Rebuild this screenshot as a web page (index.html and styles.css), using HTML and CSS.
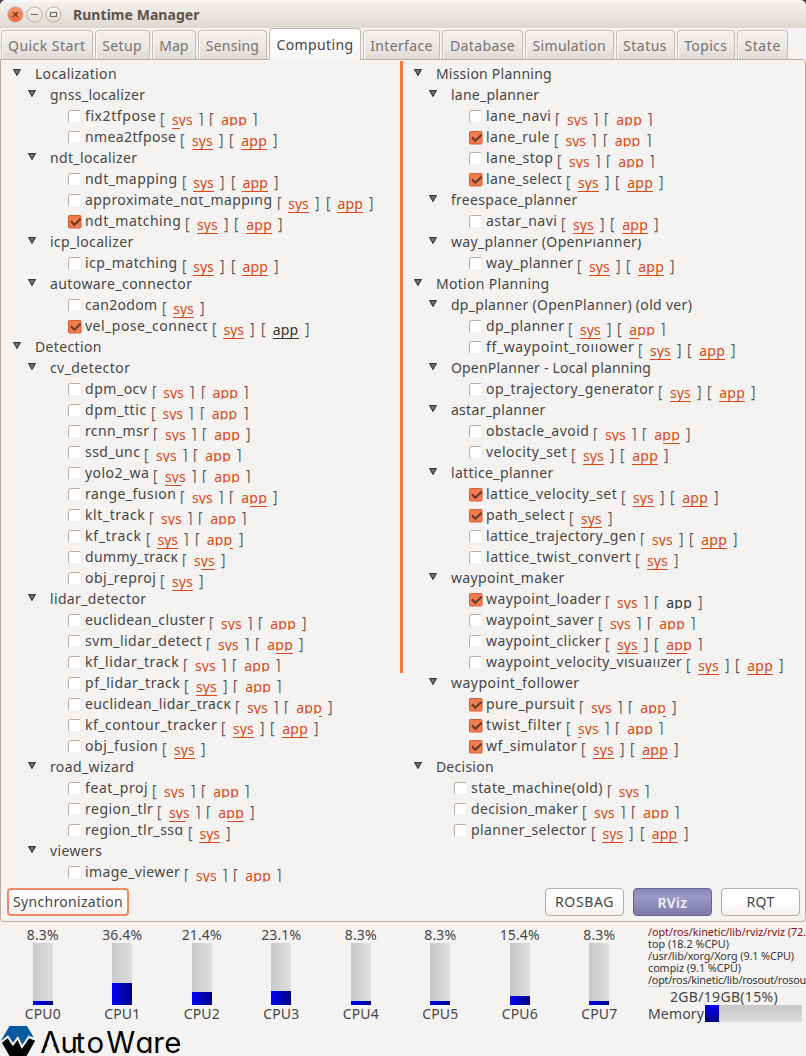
FILE: index.html
```html
<!DOCTYPE html>
<html lang="en">
<head>
<meta charset="utf-8">
<title>Runtime Manager</title>
<link rel="stylesheet" href="styles.css">
</head>
<body>
<div class="window">
  <header class="titlebar">
    <svg class="controls" width="60" height="20" viewBox="0 0 60 20">
      <defs>
        <linearGradient id="g-close" x1="0" y1="0" x2="0" y2="1"><stop offset="0" stop-color="#f79a76"/><stop offset="1" stop-color="#ee6a3c"/></linearGradient>
        <linearGradient id="g-btn" x1="0" y1="0" x2="0" y2="1"><stop offset="0" stop-color="#f8f6f4"/><stop offset="1" stop-color="#e2dcd6"/></linearGradient>
      </defs>
      <circle cx="9.4" cy="9.5" r="7.6" fill="url(#g-close)" stroke="#cf9f8a"/>
      <path d="M7 7l5 5M12 7l-5 5" stroke="#6b3320" stroke-width="1.2"/>
      <circle cx="28.4" cy="9.5" r="7.6" fill="url(#g-btn)" stroke="#b9afa6"/>
      <path d="M25 9.5h7" stroke="#75695f" stroke-width="1.2"/>
      <circle cx="47.4" cy="9.5" r="7.6" fill="url(#g-btn)" stroke="#b9afa6"/>
      <rect x="44.5" y="7.5" width="6" height="4" fill="none" stroke="#75695f" stroke-width="1.1"/>
    </svg>
    <h1 class="title" data-fit="126.5">Runtime Manager</h1>
  </header>
  <nav class="tabs" id="tabs"></nav>
  <main class="panel">
    <div class="columns">
      <section class="tree" id="tree-left"></section>
      <div class="sash"></div>
      <section class="tree" id="tree-right"></section>
    </div>
    <div class="actions">
      <button class="btn btn-sync"><span data-fit="110">Synchronization</span></button>
      <span class="grow"></span>
      <button class="btn"><span data-fit="59">ROSBAG</span></button>
      <button class="btn btn-on"><span data-fit="30">RViz</span></button>
      <button class="btn"><span data-fit="28">RQT</span></button>
    </div>
  </main>
  <footer class="status">
    <div class="cpus" id="cpus"></div>
    <div class="usage">
      <div class="procs">
        <div class="hot"><span data-fit="158">/opt/ros/kinetic/lib/rviz/rviz (72.</span></div>
        <div><span data-fit="81">top (18.2 %CPU)</span></div>
        <div><span data-fit="146">/usr/lib/xorg/Xorg (9.1 %CPU)</span></div>
        <div><span data-fit="93">compiz (9.1 %CPU)</span></div>
        <div><span data-fit="158">/opt/ros/kinetic/lib/rosout/rosou</span></div>
      </div>
      <div class="mem-text"><span data-fit="108">2GB/19GB(15%)</span></div>
      <div class="mem"><span class="mem-label" data-fit="56">Memory</span><div class="mem-bar"><i></i></div></div>
    </div>
  </footer>
  <svg class="logo" width="190" height="31" viewBox="0 1025 190 31">
    <path d="M9.5 1026H27L33.5 1037L28.8 1038L22 1047L17.7 1039L13 1045L8 1038L3 1041L1 1040.5Z" fill="#0a5aa2"/>
    <path d="M1.5 1042L8 1038L13 1044L17.7 1039L22 1047L28.8 1038L35.3 1040.5L26.5 1056H9.5Z" fill="#000"/>
    <path d="M1 1042.3L7.8 1036.8L13 1044.5L17.7 1038L22 1047L29 1036.8L35 1039.5" fill="none" stroke="#f5f3f2" stroke-width="2"/>
    <text class="wordmark" y="1053" x="40.3 60.6 75.4 86.4 106.2 135.6 153.3 164.3">AutoWare</text>
    <path d="M50.4 1037L44.7 1051.8L44.4 1053H56.4L56 1051.8Z" fill="#f5f3f2"/>
  </svg>
</div>
<script src="app.js"></script>
</body>
</html>
```
FILE: styles.css
```css
* { box-sizing: border-box; }
body { margin: 0; background: #4a4542; font-family: "Noto Sans", "Open Sans", sans-serif; font-size: 14px; color: #464646; }
.window { width: 806px; height: 1056px; overflow: hidden; background: #f5f3f2; border-radius: 6px 6px 0 0; display: flex; flex-direction: column; }
[data-fit] { display: inline-block; white-space: pre; }

.titlebar { height: 28px; flex: none; display: flex; align-items: center; padding: 1px 0 0 6px; background: linear-gradient(#fbfaf9 0, #f2f0ed 3px, #dfd8d1 100%); }
.controls { flex: none; }
.title { margin: 0 0 0 7px; font-size: 14px; line-height: 20px; font-weight: 700; color: #5c534c; }

.tabs { height: 32px; flex: none; display: flex; align-items: flex-end; gap: 2px; padding-left: 1px; }
.tab { height: 30px; display: flex; justify-content: center; flex: none; border: 1px solid #c5bbb2; border-bottom: 0; border-radius: 4px 4px 0 0; background: linear-gradient(#f4f2f0, #ece8e5 50%, #dfdad5); line-height: 30px; color: #77736f; box-shadow: inset 1px 1px #fbfaf9; }
.tab.current { height: 32px; background: linear-gradient(#fff, #f7f5f4); color: #464646; position: relative; z-index: 1; line-height: 31px; }

.panel { height: 863px; flex: none; margin-top: -1px; border: 1px solid #b9ada2; border-radius: 0 4px 4px 4px; display: flex; flex-direction: column; }
.columns { display: flex; height: 828px; flex: none; }
.tree { width: 399px; padding-top: 3px; flex: none; }
.sash { width: 3px; height: 612px; margin-top: 1px; background: #f07746; flex: none; }
#tree-right { width: 401px; margin-left: -1px; }
.row { height: 21px; display: flex; line-height: 21px; }
.row.group { padding-left: 12.4px; }
.row.sub { padding-left: 27.4px; }
.row.item { padding-left: 67px; }
.row.item.shallow { padding-left: 52px; }
.arrow { width: 8px; height: 7px; margin: 6px 13.5px 0 0; flex: none; }
.check { width: 14px; height: 14px; margin: 5px 3px 0 0; flex: none; }
.name { flex: none; white-space: pre; }
.tok { flex: none; margin-top: 4px; height: 20px; white-space: pre; }
.tok span { display: block; height: 21px; line-height: 21px; }
.br { font-size: 16px; color: #5c5c5c; }
.br span { transform-origin: 0 50%; transform: scaleX(.85); }
.cut span { clip-path: inset(-4px -4px 4px -4px); }
.open { width: 11.8px; }
.close { width: 10.7px; }
.link { color: #dd4814; background: linear-gradient(#dd4814, #dd4814) no-repeat left bottom / 100% 1px; }
.link.black { color: #333; background-image: linear-gradient(#333, #333); }
.sys { width: 21px; margin-right: 5.7px; }
.app { width: 26px; margin-right: 6px; }
.u0 { background-size: 0 1px; }
.ul { background-size: 40% 1px; }
.um { background-size: 80% 1px; }
.us { background-size: 3px 1px; }
.ur { background-size: 65% 1px; background-position: right bottom; }
.ut { background-size: 3px 1px; background-position: right bottom; }

.actions { display: flex; padding: 0 5px 0 6px; height: 28px; gap: 9px; }
.grow { flex: 1; }
.btn { width: 79px; height: 28px; padding: 0; font: inherit; line-height: 26px; color: #464646; border: 1px solid #b9aea5; border-radius: 4px; background: linear-gradient(#fff 50%, #f3efed); display: flex; justify-content: center; flex: none; }
.btn-sync { width: 122px; border: 2px solid #ee8a64; line-height: 24px; }
.btn-on { background: linear-gradient(#8985b4, #9b98c6 30%, #7d79a9); border-color: #67648e; color: #f2f1f8; font-weight: 600; line-height: 27px; }

.status { display: flex; height: 134px; flex: none; }
.cpus { display: flex; width: 645px; padding: 2px 0 0 3px; flex: none; }
.cpu { width: 79.5px; padding-right: 0; display: flex; flex-direction: column; align-items: center; line-height: 21px; flex: none; }
.cpu > span { height: 20px; }
.cpu-label { margin-top: -2px; }
.meter { width: 20px; height: 62px; margin-top: -1px; display: flex; align-items: flex-end; background: linear-gradient(90deg, #c8c8c8, #dedede); }
.meter i { width: 20px; background: linear-gradient(90deg, #0000f8, #000080); }
.usage { flex: 1; padding: 4px 4px 0 3px; min-width: 0; }
.procs { height: 61px; border-bottom: 1px solid #dcd7d3; font-size: 10.8px; line-height: 12px; white-space: nowrap; color: #333; }
.procs div { height: 12px; }
.procs .hot { color: #8b1010; }
.mem-text { height: 18px; line-height: 19px; padding-left: 22px; }
.mem { display: flex; }
.mem-label { width: 57px; line-height: 18px; flex: none; }
.mem-bar { width: 97px; height: 17px; display: flex; background: linear-gradient(#c6c6c6, #dedede); flex: none; }
.mem-bar i { width: 14px; background: linear-gradient(#0000f8, #000080); }
.logo { flex: none; margin-top: -31px; }
.wordmark { font-family: Inter, sans-serif; font-size: 29.4px; font-feature-settings: "cv11"; fill: #000; }
```
FILE: app.js
```js
// Tabs: [label, width, text width, current]
const tabs = [
  ["Quick Start", 91.5, 77.5], ["Setup", 55.2, 39.5], ["Map", 44.3, 29], ["Sensing", 69, 53.5],
  ["Computing", 92, 77, true], ["Interface", 77, 62.5], ["Database", 81, 65], ["Simulation", 88.6, 73.5],
  ["Status", 59, 44], ["Topics", 58.3, 43], ["State", 51.5, 36.5]
];
document.getElementById("tabs").innerHTML = tabs.map(([t, w, f, cur]) =>
  `<div class="tab${cur ? " current" : ""}" style="width:${w}px"><span data-fit="${f}">${t}</span></div>`).join("");

// Groups: [level, label, width, trim]
// Items:  [name, width, link flags, {on, trim, black, shallow}]
const full = "111111";
const left = [
  [0, "Localization", 82], [1, "gnss_localizer", 95.5],
  ["fix2tfpose", 76.3, "1l0000"], ["nmea2tfpose", 96.3, full],
  [1, "ndt_localizer", 87.5],
  ["ndt_mapping", 97.5, full], ["approximate_ndt_mapping", 192.5, "011111", { trim: 95 }], ["ndt_matching", 101.3, full, { on: 1 }],
  [1, "icp_localizer", 83.6], ["icp_matching", 97.5, full],
  [1, "autoware_connector", 142.5], ["can2odom", 77.5, "111"], ["vel_pose_connect", 127.7, full, { on: 1, trim: 115, black: 1 }],
  [0, "Detection", 67], [1, "cv_detector", 80.5],
  ["dpm_ocv", 67.5, "000000"], ["dpm_ttic", 66.7, "100000"], ["rcnn_msr", 69.3, "000001"], ["ssd_unc", 60.3, "100000"],
  ["yolo2_wa", 69.3, "1m0000"], ["range_fusion", 96.3, "0000r1", { trim: 67 }], ["klt_track", 65.3, "000000"],
  ["kf_track", 61.7, "1100t1"], ["dummy_track", 98.3, "0r1", { trim: 60 }], ["obj_reproj", 76.3, "111"],
  [1, "lidar_detector", 96.5],
  ["euclidean_cluster", 125.3, "000001"], ["svm_lidar_detect", 122.3, "0000r1"], ["kf_lidar_track", 99.3, "000000"],
  ["pf_lidar_track", 100.3, "111000"], ["euclidean_lidar_track", 151.3, "0000t1", { trim: 110 }],
  ["kf_contour_tracker", 137.3, full], ["obj_fusion", 78.3, "111"],
  [1, "road_wizard", 84.3],
  ["feat_proj", 68.3, "100000"], ["region_tlr", 73.3, "1m00r1"], ["region_tlr_ssd", 103.7, "111", { trim: 88 }],
  [1, "viewers", 52.5], ["image_viewer", 100.3, "000000"]
];
const right = [
  [0, "Mission Planning", 116], [1, "lane_planner", 88.5],
  ["lane_navi", 70.3, "000000"], ["lane_rule", 68.7, "100000", { on: 1 }], ["lane_stop", 72.3, "100000"],
  ["lane_select", 81.3, full, { on: 1, trim: 70 }],
  [1, "freespace_planner", 126.7], ["astar_navi", 76.3, full],
  [1, "way_planner (OpenPlanner)", 190.7, 134], ["way_planner", 92.3, full],
  [0, "Motion Planning", 113.5], [1, "dp_planner (OpenPlanner) (old ver)", 241.3],
  ["dp_planner", 83.3, "1111l0"], ["ff_waypoint_follower", 153.3, full, { trim: 90 }],
  [1, "OpenPlanner - Local planning", 200.3], ["op_trajectory_generator", 173.3, full],
  [1, "astar_planner", 94.7], ["obstacle_avoid", 108.3, "0000r1"], ["velocity_set", 86.3, full],
  [1, "lattice_planner", 102.7],
  ["lattice_velocity_set", 136.3, full, { on: 1 }], ["path_select", 84.3, "111", { on: 1 }],
  ["lattice_trajectory_gen", 155.3, "001111", { trim: 105 }], ["lattice_twist_convert", 150.3, "111"],
  [1, "waypoint_maker", 113.7],
  ["waypoint_loader", 120.3, "000001", { on: 1, black: 1 }], ["waypoint_saver", 113.3, "100000"],
  ["waypoint_clicker", 120.3, "1111m0"], ["waypoint_velocity_visualizer", 201.3, full, { trim: 128 }],
  [1, "waypoint_follower", 128.7],
  ["pure_pursuit", 94.3, "0000t1", { on: 1 }], ["twist_filter", 81.3, "1s0000", { on: 1 }], ["wf_simulator", 96.3, full, { on: 1 }],
  [0, "Decision", 58],
  ["state_machine(old)", 137, "000", { shallow: 1 }], ["decision_maker", 112.3, "100000", { shallow: 1 }],
  ["planner_selector", 120.7, full, { shallow: 1 }]
];

const arrow = `<svg class="arrow" viewBox="0 0 8 7"><path d="M.8 .7H7.2L4 6.3Z" fill="#777" stroke="#3c3c3c" stroke-width="1.2"/></svg>`;
const box = on => on
  ? `<svg class="check" viewBox="0 0 14 14"><rect x=".5" y=".5" width="12.5" height="12.5" rx=".8" fill="#f27b4f" stroke="#cf6138"/><path d="M3 6.4L6.4 9.8L12.6 3.8" fill="none" stroke="#6a3a27" stroke-width="2.2"/></svg>`
  : `<svg class="check" viewBox="0 0 14 14"><rect x=".5" y=".5" width="12.5" height="12.5" rx="2" fill="#fff" stroke="#eeeae7"/><path d="M.5 12V2.5Q.5 .5 2.5 .5H12" fill="none" stroke="#b9aea5"/></svg>`;
const trimStyle = t => t ? `;clip-path:polygon(-2px 0,${t}px 0,${t}px 8px,110% 8px,110% 120%,-2px 120%)` : "";

const token = (flag, i, black) => {
  const cut = flag === "1" ? "" : " cut";
  if (i % 3 === 1) {
    const word = i === 1 ? "sys" : "app";
    const dark = black && i === 4 ? " black" : "";
    return `<a class="tok link ${word}${cut}${dark} u${flag}"><span data-fit="${i === 1 ? 20.5 : 25.7}">${word}</span></a>`;
  }
  return `<div class="tok br ${i % 3 ? "close" : "open"}${cut}"><span>${i % 3 ? "]" : "["}</span></div>`;
};

const render = row => {
  if (typeof row[0] === "number") {
    const [level, label, w, trim] = row;
    return `<div class="row ${level ? "sub" : "group"}">${arrow}<span class="name" data-fit="${w}" style="width:${w}px${trimStyle(trim)}">${label}</span></div>`;
  }
  const [name, w, flags, o = {}] = row;
  return `<div class="row item${o.shallow ? " shallow" : ""}">${box(o.on)}<span class="name" data-fit="${w - 5}" style="width:${w - 1}px${trimStyle(o.trim)}">${name}</span>` +
    [...flags].map((f, i) => token(f, i, o.black)).join("") + `</div>`;
};
document.getElementById("tree-left").innerHTML = left.map(render).join("");
document.getElementById("tree-right").innerHTML = right.map(render).join("");

// CPU meters: [load, fill height]
document.getElementById("cpus").innerHTML =
  [["8.3%", 4], ["36.4%", 22], ["21.4%", 13], ["23.1%", 14], ["8.3%", 4], ["8.3%", 4], ["15.4%", 9], ["8.3%", 4]]
    .map(([p, h], i) => `<div class="cpu"><span data-fit="${p.length > 4 ? 40 : 32}">${p}</span><div class="meter"><i style="height:${h}px"></i></div><span class="cpu-label" data-fit="36">CPU${i}</span></div>`).join("");

// Spread each label's letters over its nominal width.
document.querySelectorAll("[data-fit]").forEach(el => {
  const range = document.createRange();
  range.selectNodeContents(el);
  const gap = (Number(el.dataset.fit) - range.getBoundingClientRect().width) / el.textContent.length;
  el.style.letterSpacing = gap.toFixed(3) + "px";
});
```
